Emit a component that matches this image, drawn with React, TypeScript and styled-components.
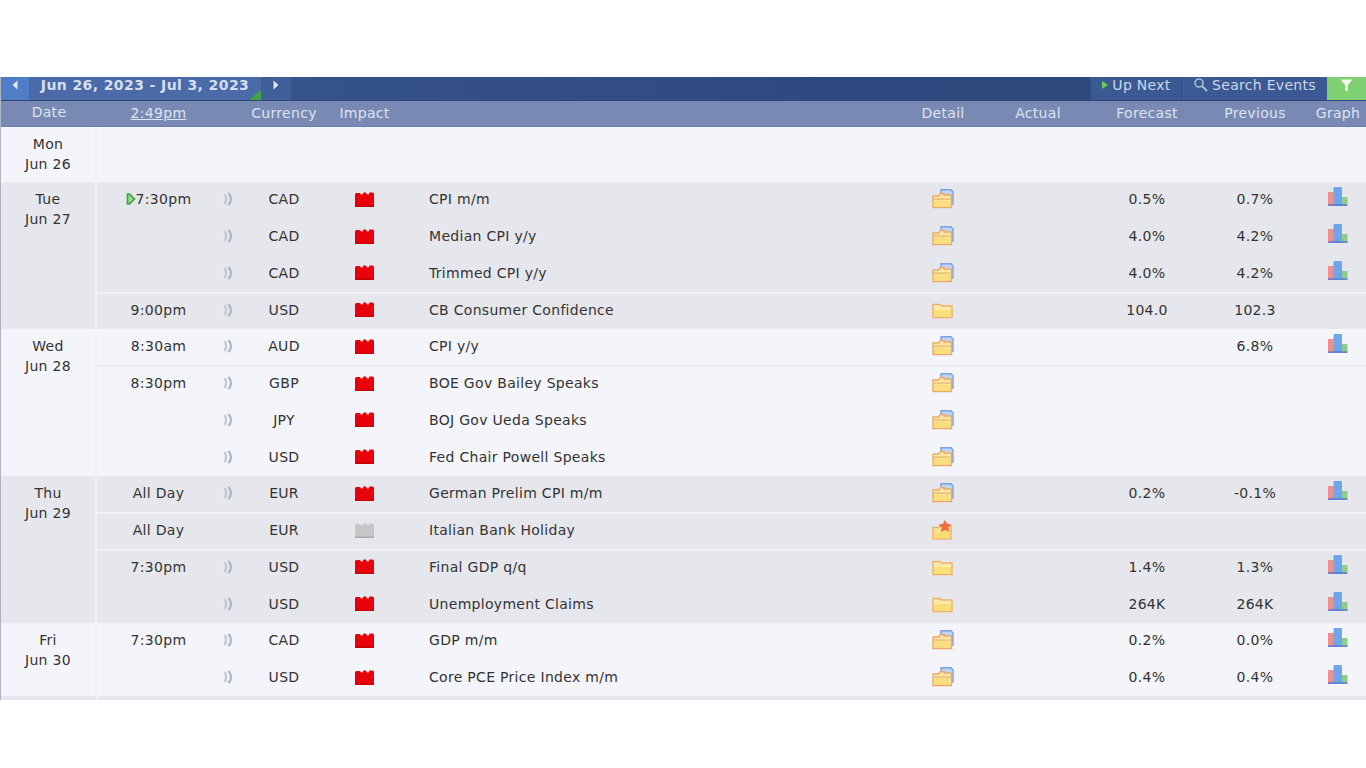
import React from 'react';
import styled, { createGlobalStyle } from 'styled-components';

const GlobalStyle = createGlobalStyle`
  html, body {
    margin: 0;
    padding: 0;
    background: #fff;
  }
  body {
    font-family: "DejaVu Sans", Verdana, sans-serif;
    font-size: 14px;
    letter-spacing: 0.3px;
    color: #333;
  }
`;

const COLS = '123px 16px 96px 65px 521px 50px 140px 78px 138px 28px 14px';

const Page = styled.div`
  padding-top: 77px;
  width: 1366px;
  height: 768px;
  box-sizing: border-box;
  overflow: hidden;
`;

const Calendar = styled.div`
  border-left: 1px solid #aeb4c0;
  width: 1366px;
  box-sizing: border-box;
`;

const TopBar = styled.div`
  display: flex;
  height: 24px;
  background: linear-gradient(90deg, #3a5790 0%, #2f4a80 60%, #2e4a7f 100%);
  border-bottom: 1px solid #2c4475;
  box-sizing: border-box;
`;

const ArrowButton = styled.div<{ $active?: boolean }>`
  width: ${p => (p.$active ? '28px' : '30px')};
  display: flex;
  align-items: center;
  justify-content: center;
  padding-bottom: 7px;
  box-sizing: border-box;
  background: ${p => (p.$active ? '#4f7dc6' : '#3f5f99')};
`;

const Range = styled.div`
  position: relative;
  width: 232px;
  display: flex;
  align-items: center;
  justify-content: center;
  padding-bottom: 7px;
  box-sizing: border-box;
  background: #4a6ba8;
  color: #d6deee;
  font-size: 14px;
  font-weight: bold;
  letter-spacing: 0.4px;
  white-space: nowrap;
`;

const Corner = styled.span`
  position: absolute;
  right: 0;
  bottom: 0;
  width: 0;
  height: 0;
  border-style: solid;
  border-width: 0 0 10px 12px;
  border-color: transparent transparent #3ea63c transparent;
`;

const Spacer = styled.div`
  flex: 1;
`;

const BarButton = styled.div<{ $w: number }>`
  width: ${p => p.$w}px;
  display: flex;
  align-items: center;
  justify-content: center;
  gap: 3px;
  padding-bottom: 7px;
  background: #3b5a94;
  border-left: 1px solid #304d84;
  box-sizing: border-box;
  color: #cdd6e8;
  white-space: nowrap;
`;

const FilterButton = styled.div`
  width: 39px;
  display: flex;
  align-items: center;
  justify-content: center;
  padding-bottom: 7px;
  box-sizing: border-box;
  background: #7fcf73;
`;

const HeaderRow = styled.div`
  display: flex;
  height: 26px;
  padding-bottom: 2px;
  background: #788ab4;
  border-bottom: 1px solid #6b7eaa;
  box-sizing: border-box;
  color: #dde3ef;
`;

const HeaderDate = styled.div`
  width: 96px;
  flex: none;
  text-align: center;
  line-height: 23px;
`;

const Columns = styled.div`
  display: grid;
  grid-template-columns: ${COLS};
  align-items: center;
  flex: 1;
  min-width: 0;
`;

const HeaderCell = styled.div<{ $underline?: boolean }>`
  justify-self: center;
  white-space: nowrap;
  text-decoration: ${p => (p.$underline ? 'underline' : 'none')};
`;

const DayGroup = styled.div<{ $alt: boolean }>`
  display: flex;
  background: ${p => (p.$alt ? '#e6e7ec' : '#f3f5fa')};
`;

const DayCell = styled.div`
  width: 96px;
  flex: none;
  box-sizing: border-box;
  padding-top: 7px;
  border-right: 2px solid #f0f1f5;
  text-align: center;
  line-height: 20px;
  color: #333;
`;

const Rows = styled.div<{ $empty?: boolean }>`
  flex: 1;
  min-width: 0;
  min-height: ${p => (p.$empty ? '54.5px' : '0')};
`;

const Row = styled(Columns)<{ $line?: boolean; $alt: boolean }>`
  height: 36.75px;
  box-sizing: border-box;
  padding-bottom: 1px;
  box-shadow: ${p =>
    p.$line ? `inset 0 1.5px 0 ${p.$alt ? '#f3f4f8' : '#e6e8ee'}` : 'none'};
`;

const TimeCell = styled.div`
  justify-self: center;
  display: flex;
  align-items: center;
  white-space: nowrap;
`;

const Center = styled.div`
  justify-self: center;
  display: flex;
  white-space: nowrap;
`;

const RaisedCenter = styled(Center)`
  margin-bottom: 5px;
`;

const EventCell = styled.div`
  padding-left: 32px;
  white-space: nowrap;
`;

const EndStrip = styled.div`
  display: flex;
  height: 4px;
  background: #e6e7ec;
`;

const EndGap = styled.div`
  margin-left: 95px;
  width: 2px;
  background: #f0f1f5;
`;

const NextMark = () => (
  <svg width="10" height="12" viewBox="0 0 10 12">
    <path d="M1.5 1.2H3.5L8.5 6L3.5 10.8H1.5z" fill="#9ed69b" stroke="#3fa544" strokeWidth="1.7" />
  </svg>
);

const SoundIcon = () => (
  <svg width="12" height="14" viewBox="0 0 12 14">
    <path d="M2.5 2c2 3 2 7 0 10" fill="none" stroke="#c2cad7" strokeWidth="2.4" />
    <path d="M6.5 1c3.2 3.6 3.2 8.4 0 12" fill="none" stroke="#aab4c6" strokeWidth="2.4" />
  </svg>
);

const ImpactIcon = ({ gray }: { gray?: boolean }) => (
  <svg width="19" height="15" viewBox="0 0 19 15">
    <path
      d="M0 2.2L1 1H5L6 2.6H7.5L8.5 .5H11L12 2.6H13.5L14.5 .5H18L19 1.8V15H0z"
      fill={gray ? '#c6c6c6' : '#e8000a'}
    />
    <rect x="0" y="13.5" width="19" height="1.5" fill={gray ? '#a9a9a9' : '#c40006'} />
  </svg>
);

const DetailIcon = ({ kind }: { kind: string }) => (
  <svg width="22" height="20" viewBox="0 0 22 20">
    {kind === 'open' && (
      <>
        <path d="M9 .8H19L21 3V15H9z" fill="#bdd4f5" stroke="#7aa2e2" strokeWidth="1.4" />
        <path d="M1 7H6.5L8.5 4.5H12V6H19.5V18.5H1z" fill="#fbe6a6" stroke="#eda868" strokeWidth="1.4" />
        <rect x="2" y="11.5" width="16.5" height="6" fill="#fadd7c" />
        <rect x="2" y="9.5" width="16.5" height="1.2" fill="#e3b36c" />
      </>
    )}
    {kind === 'plain' && (
      <>
        <path d="M1 4.5V17.5H20V6H9.5L8 4.5z" fill="#fce9ab" stroke="#eeb16a" strokeWidth="1.4" />
        <rect x="2" y="10" width="17" height="6.8" fill="#fade76" />
      </>
    )}
    {kind === 'star' && (
      <>
        <path d="M1 7.5H7L9 5.5H19V19H1z" fill="#fbe39a" stroke="#eeb16a" strokeWidth="1.4" />
        <rect x="2" y="12" width="16" height="6.3" fill="#fadd76" />
        <path d="M13 0l2.2 3.8 4.3.7-3.1 3.1.8 4.3-4.2-2-4.2 2 .8-4.3-3.1-3.1 4.3-.7z" fill="#ee6e3c" />
      </>
    )}
  </svg>
);

const GraphIcon = () => (
  <svg width="20" height="19" viewBox="0 0 20 19">
    <rect x="0" y="5" width="6" height="13" fill="#f28e8c" />
    <rect x="13.5" y="10" width="6" height="8" fill="#8ccd8a" />
    <rect x="5.5" y="0" width="8.5" height="18" rx="1" fill="#6fa6ea" />
    <rect x="0" y="17.5" width="19.5" height="1.3" fill="#4668c8" />
  </svg>
);

const ArrowLeft = () => (
  <svg width="8" height="10" viewBox="0 0 8 10">
    <path d="M6.5 0.5V9.5L1.5 5z" fill="#e3e9f5" />
  </svg>
);

const ArrowRight = () => (
  <svg width="8" height="10" viewBox="0 0 8 10">
    <path d="M1.5 0.5V9.5L6.5 5z" fill="#e3e9f5" />
  </svg>
);

const SearchIcon = () => (
  <svg width="16" height="16" viewBox="0 0 16 16">
    <circle cx="6" cy="6" r="4" fill="none" stroke="#aebbd3" strokeWidth="1.6" />
    <path d="M9 9l5 5" stroke="#aebbd3" strokeWidth="2" />
  </svg>
);

const FunnelIcon = () => (
  <svg width="13" height="13" viewBox="0 0 13 13">
    <path d="M0.5 0.5H12.5L8 6V12.5L5 11V6z" fill="#f0f8ec" />
  </svg>
);

const PlayIcon = () => (
  <svg width="8" height="10" viewBox="0 0 8 10">
    <path d="M1 1V9L7 5z" fill="#5fd04f" />
  </svg>
);

type Ev = {
  time?: string;
  next?: boolean;
  sound?: boolean;
  cur: string;
  gray?: boolean;
  title: string;
  detail: string;
  forecast?: string;
  previous?: string;
  graph?: boolean;
  line?: boolean;
};

const days: { day: string; date: string; events: Ev[] }[] = [
  { day: 'Mon', date: 'Jun 26', events: [] },
  {
    day: 'Tue',
    date: 'Jun 27',
    events: [
      { time: '7:30pm', next: true, sound: true, cur: 'CAD', title: 'CPI m/m', detail: 'open', forecast: '0.5%', previous: '0.7%', graph: true },
      { sound: true, cur: 'CAD', title: 'Median CPI y/y', detail: 'open', forecast: '4.0%', previous: '4.2%', graph: true },
      { sound: true, cur: 'CAD', title: 'Trimmed CPI y/y', detail: 'open', forecast: '4.0%', previous: '4.2%', graph: true },
      { time: '9:00pm', sound: true, cur: 'USD', title: 'CB Consumer Confidence', detail: 'plain', forecast: '104.0', previous: '102.3', line: true },
    ],
  },
  {
    day: 'Wed',
    date: 'Jun 28',
    events: [
      { time: '8:30am', sound: true, cur: 'AUD', title: 'CPI y/y', detail: 'open', previous: '6.8%', graph: true },
      { time: '8:30pm', sound: true, cur: 'GBP', title: 'BOE Gov Bailey Speaks', detail: 'open', line: true },
      { sound: true, cur: 'JPY', title: 'BOJ Gov Ueda Speaks', detail: 'open' },
      { sound: true, cur: 'USD', title: 'Fed Chair Powell Speaks', detail: 'open' },
    ],
  },
  {
    day: 'Thu',
    date: 'Jun 29',
    events: [
      { time: 'All Day', sound: true, cur: 'EUR', title: 'German Prelim CPI m/m', detail: 'open', forecast: '0.2%', previous: '-0.1%', graph: true },
      { time: 'All Day', cur: 'EUR', gray: true, title: 'Italian Bank Holiday', detail: 'star', line: true },
      { time: '7:30pm', sound: true, cur: 'USD', title: 'Final GDP q/q', detail: 'plain', forecast: '1.4%', previous: '1.3%', graph: true, line: true },
      { sound: true, cur: 'USD', title: 'Unemployment Claims', detail: 'plain', forecast: '264K', previous: '264K', graph: true },
    ],
  },
  {
    day: 'Fri',
    date: 'Jun 30',
    events: [
      { time: '7:30pm', sound: true, cur: 'CAD', title: 'GDP m/m', detail: 'open', forecast: '0.2%', previous: '0.0%', graph: true },
      { sound: true, cur: 'USD', title: 'Core PCE Price Index m/m', detail: 'open', forecast: '0.4%', previous: '0.4%', graph: true },
    ],
  },
];

const App = (): JSX.Element => {
  return (
    <Page>
      <GlobalStyle />
      <Calendar>
        <TopBar>
          <ArrowButton $active><ArrowLeft /></ArrowButton>
          <Range>
            Jun 26, 2023 - Jul 3, 2023
            <Corner />
          </Range>
          <ArrowButton><ArrowRight /></ArrowButton>
          <Spacer />
          <BarButton $w={91}><PlayIcon />Up Next</BarButton>
          <BarButton $w={146}><SearchIcon />Search Events</BarButton>
          <FilterButton><FunnelIcon /></FilterButton>
        </TopBar>
        <HeaderRow>
          <HeaderDate>Date</HeaderDate>
          <Columns>
            <HeaderCell $underline>2:49pm</HeaderCell>
            <span />
            <HeaderCell>Currency</HeaderCell>
            <HeaderCell>Impact</HeaderCell>
            <span />
            <HeaderCell>Detail</HeaderCell>
            <HeaderCell>Actual</HeaderCell>
            <HeaderCell>Forecast</HeaderCell>
            <HeaderCell>Previous</HeaderCell>
            <HeaderCell>Graph</HeaderCell>
          </Columns>
        </HeaderRow>
        {days.map((d, i) => (
          <DayGroup key={d.date} $alt={i % 2 === 1}>
            <DayCell>
              {d.day}
              <br />
              {d.date}
            </DayCell>
            <Rows $empty={d.events.length === 0}>
              {d.events.map(ev => (
                <Row key={ev.title} $line={ev.line} $alt={i % 2 === 1}>
                  <TimeCell>
                    {ev.next && <NextMark />}
                    {ev.time}
                  </TimeCell>
                  <Center>{ev.sound && <SoundIcon />}</Center>
                  <Center>{ev.cur}</Center>
                  <Center><ImpactIcon gray={ev.gray} /></Center>
                  <EventCell>{ev.title}</EventCell>
                  <Center><DetailIcon kind={ev.detail} /></Center>
                  <span />
                  <Center>{ev.forecast}</Center>
                  <Center>{ev.previous}</Center>
                  <RaisedCenter>{ev.graph && <GraphIcon />}</RaisedCenter>
                </Row>
              ))}
            </Rows>
          </DayGroup>
        ))}
        <EndStrip><EndGap /></EndStrip>
      </Calendar>
    </Page>
  );
};

export default App;
